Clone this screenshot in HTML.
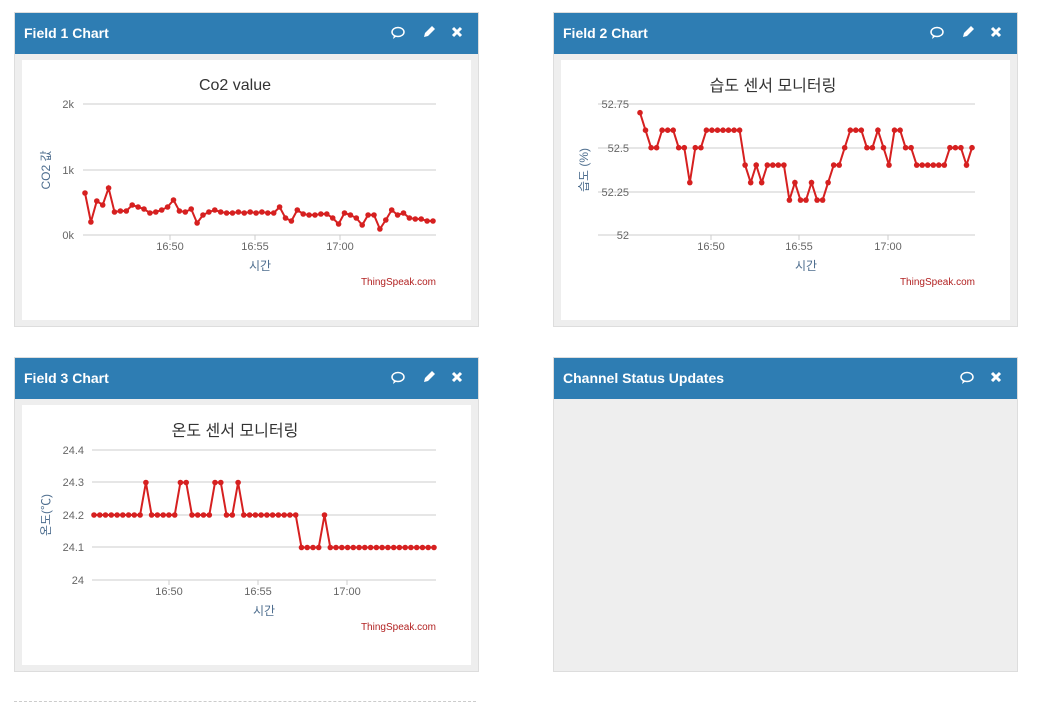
<!DOCTYPE html>
<html><head><meta charset="utf-8"><style>
body{margin:0;width:1057px;height:703px;background:#fff;position:relative;overflow:hidden;font-family:"Liberation Sans","Noto Sans CJK KR",sans-serif}
.p{position:absolute;width:465px;height:315px;border:1px solid #ddd;background:#eee;box-sizing:border-box}
.h{height:41px;background:#2e7db3;color:#fff;font-weight:bold;font-size:14px;line-height:40px;padding-left:9px;position:relative}
.ic{position:absolute;top:0;right:0;height:40px}
.w{position:absolute;left:7px;top:47px;width:449px;height:260px;background:#fff}
svg text{font-family:"Liberation Sans","Noto Sans CJK KR",sans-serif}
</style></head><body>
<div class="p" style="left:14px;top:12px"><div class="h">Field 1 Chart<svg class="ic" width="100" height="40" viewBox="0 0 100 40"><ellipse cx="20" cy="19" rx="6" ry="4.5" fill="none" stroke="#fff" stroke-width="1.5"/><path d="M16 22 L15 26 L19 23" fill="#fff"/><path d="M46 24 L47 20 L54 13 L57 16 L50 23 Z" fill="#fff"/><path d="M75 15 L83 23 M83 15 L75 23" stroke="#fff" stroke-width="3"/></svg></div><div class="w"></div></div>
<div class="p" style="left:553px;top:12px"><div class="h">Field 2 Chart<svg class="ic" width="100" height="40" viewBox="0 0 100 40"><ellipse cx="20" cy="19" rx="6" ry="4.5" fill="none" stroke="#fff" stroke-width="1.5"/><path d="M16 22 L15 26 L19 23" fill="#fff"/><path d="M46 24 L47 20 L54 13 L57 16 L50 23 Z" fill="#fff"/><path d="M75 15 L83 23 M83 15 L75 23" stroke="#fff" stroke-width="3"/></svg></div><div class="w"></div></div>
<div class="p" style="left:14px;top:357px"><div class="h">Field 3 Chart<svg class="ic" width="100" height="40" viewBox="0 0 100 40"><ellipse cx="20" cy="19" rx="6" ry="4.5" fill="none" stroke="#fff" stroke-width="1.5"/><path d="M16 22 L15 26 L19 23" fill="#fff"/><path d="M46 24 L47 20 L54 13 L57 16 L50 23 Z" fill="#fff"/><path d="M75 15 L83 23 M83 15 L75 23" stroke="#fff" stroke-width="3"/></svg></div><div class="w"></div></div>
<div class="p" style="left:553px;top:357px"><div class="h">Channel Status Updates<svg class="ic" width="70" height="40" viewBox="30 0 70 40"><ellipse cx="50" cy="19" rx="6" ry="4.5" fill="none" stroke="#fff" stroke-width="1.5"/><path d="M46 22 L45 26 L49 23" fill="#fff"/><path d="M75 15 L83 23 M83 15 L75 23" stroke="#fff" stroke-width="3"/></svg></div></div>
<div style="position:absolute;left:14px;top:701px;width:462px;border-top:1px dashed #ccc"></div>
<svg id="s" width="1057" height="703" style="position:absolute;left:0;top:0"></svg>
<script>
var S='';
function chart(o){
 var g='';
 o.grid.forEach(function(l){g+='<line x1="'+o.x0+'" x2="'+o.x1+'" y1="'+l[0]+'" y2="'+l[0]+'" stroke="#ccc"/><text x="'+(o.lx)+'" y="'+(l[0]+4)+'" font-size="11" fill="#666" text-anchor="end">'+l[1]+'</text>';});
 o.ticks.forEach(function(t){g+='<line x1="'+t[0]+'" x2="'+t[0]+'" y1="'+o.yb+'" y2="'+(o.yb+5)+'" stroke="#ccc"/><text x="'+t[0]+'" y="'+(o.yb+15)+'" font-size="11" fill="#666" text-anchor="middle">'+t[1]+'</text>';});
 g+='<text x="'+o.tx+'" y="'+o.ty+'" font-size="16" fill="#333" text-anchor="middle">'+o.title+'</text>';
 g+='<text x="'+o.tx2+'" y="'+(o.yb+35)+'" font-size="12" fill="#4d6d8e" text-anchor="middle">시간</text>';
 g+='<text transform="translate('+o.ax+','+o.ay+') rotate(-90)" font-size="12" fill="#4d6d8e" text-anchor="middle">'+o.at+'</text>';
 g+='<text x="'+o.x1+'" y="'+(o.yb+50)+'" font-size="10" fill="#b22222" text-anchor="end">ThingSpeak.com</text>';
 var pts=[],n=o.ys.length,s=(o.pe-o.ps)/(n-1);
 o.ys.forEach(function(y,i){pts.push((o.ps+i*s).toFixed(1)+','+y.toFixed(1));});
 g+='<polyline points="'+pts.join(' ')+'" fill="none" stroke="#d62020" stroke-width="2"/>';
 pts.forEach(function(p){var a=p.split(',');g+='<circle cx="'+a[0]+'" cy="'+a[1]+'" r="2.8" fill="#d62020"/>';});
 S+=g;
}
chart({x0:83,x1:436,lx:74,yb:235,grid:[[104,'2k'],[170,'1k'],[235,'0k']],ticks:[[170,'16:50'],[255,'16:55'],[340,'17:00']],title:'Co2 value',tx:235,ty:90,tx2:260,ax:50,ay:170,at:'CO2 값',ps:85,pe:433,
ys:[193,222,201,205,188,212,211,211,205,207,209,213,212,210,207,200,211,212,209,223,215,212,210,212,213,213,212,213,212,213,212,213,213,207,218,221,210,214,215,215,214,214,218,224,213,215,218,225,215,215,229,220,210,215,213,218,219,219,221,221]});
var h=[27,26,25,25,26,26,26,25,25,23,25,25,26,26,26,26,26,26,26,24,23,24,23,24,24,24,24,22,23,22,22,23,22,22,23,24,24,25,26,26,26,25,25,26,25,24,26,26,25,25,24,24,24,24,24,24,25,25,25,24,25];
chart({x0:598,x1:975,lx:629,yb:235,grid:[[104,'52.75'],[148,'52.5'],[192,'52.25'],[235,'52']],ticks:[[711,'16:50'],[799,'16:55'],[888,'17:00']],title:'습도 센서 모니터링',tx:773,ty:91,tx2:806,ax:588,ay:170,at:'습도 (%)',ps:640,pe:972,
ys:h.map(function(v){return 235-(v-20)*(131/7.5);})});
var t=[];for(var i=0;i<60;i++){var v=2;if([9,15,16,21,22,25].indexOf(i)>=0)v=3;if(i>=36&&i!=40)v=1;t.push(580-v*32.5);}
chart({x0:92,x1:436,lx:84,yb:580,grid:[[450,'24.4'],[482,'24.3'],[515,'24.2'],[547,'24.1'],[580,'24']],ticks:[[169,'16:50'],[258,'16:55'],[347,'17:00']],title:'온도 센서 모니터링',tx:235,ty:436,tx2:264,ax:50,ay:515,at:'온도(℃)',ps:94,pe:434,ys:t});
document.getElementById('s').innerHTML=S;
</script>
</body></html>
